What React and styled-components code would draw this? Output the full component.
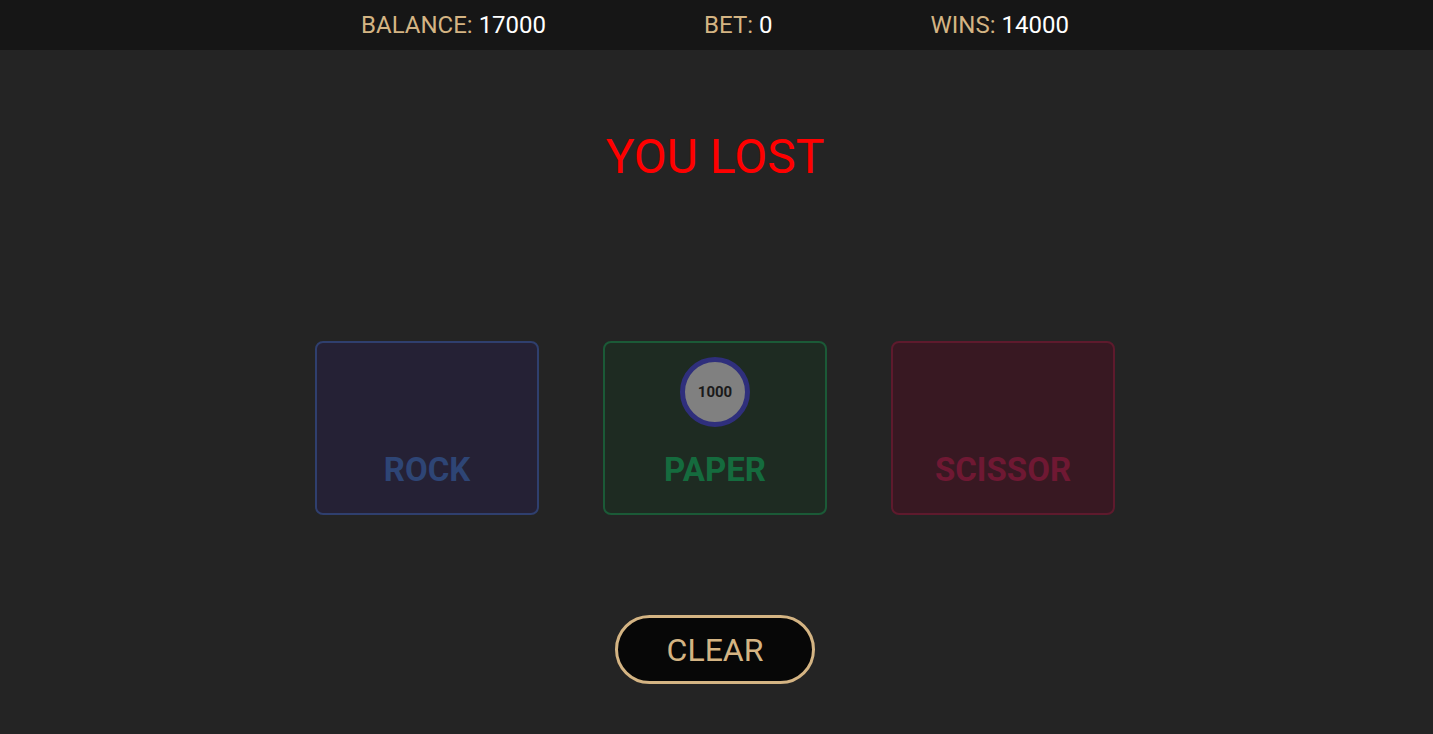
import React from "react";
import styled, { createGlobalStyle } from "styled-components";

const GlobalStyle = createGlobalStyle`
  html, body {
    margin: 0;
    padding: 0;
    background: #242424;
    font-family: Roboto, "Liberation Sans", Arial, sans-serif;
  }
`;

const Page = styled.div`
  min-height: 734px;
  background: #242424;
  display: flex;
  flex-direction: column;
  padding-right: 3px;
`;

const Header = styled.div`
  height: 50px;
  background: #161616;
  margin-right: -3px;
  padding-right: 3px;
  display: flex;
  align-items: center;
  justify-content: center;
  gap: 158px;
`;

const Stat = styled.div`
  font-size: 24px;
  color: #ffffff;
  white-space: nowrap;
`;

const StatLabel = styled.span`
  color: #d4b483;
`;

const Main = styled.div`
  display: flex;
  flex-direction: column;
  align-items: center;
  padding-top: 79px;
`;

const Result = styled.div`
  font-size: 48px;
  line-height: 56px;
  color: #ff0000;
`;

const Choices = styled.div`
  display: flex;
  gap: 64px;
  margin-top: 156px;
`;

const Card = styled.div`
  position: relative;
  box-sizing: border-box;
  width: 224px;
  height: 174px;
  border: 2px solid ${(p) => p.border};
  border-radius: 8px;
  background: ${(p) => p.bg};
  display: flex;
  flex-direction: column;
  justify-content: flex-end;
  align-items: center;
  padding-bottom: 23px;
`;

const CardLabel = styled.div`
  font-size: 33px;
  line-height: 40px;
  font-weight: 700;
  color: ${(p) => p.color};
`;

const Chip = styled.div`
  position: absolute;
  top: 14px;
  left: 50%;
  transform: translateX(-50%);
  box-sizing: border-box;
  width: 70px;
  height: 70px;
  border-radius: 50%;
  border: 5px solid #2f2f7c;
  background: #808080;
  display: flex;
  align-items: center;
  justify-content: center;
  font-size: 15px;
  font-weight: 700;
  color: #1a1a1a;
`;

const ClearButton = styled.button`
  margin-top: 100px;
  width: 200px;
  height: 69px;
  border: 3px solid #d4b483;
  border-radius: 35px;
  background: #070707;
  color: #d4b483;
  font-family: Roboto, "Liberation Sans", Arial, sans-serif;
  font-size: 32px;
  cursor: pointer;
`;

const choices = [
  { name: "ROCK", bg: "#252135", border: "#2f3f6e", color: "#2e4575" },
  { name: "PAPER", bg: "#1e2b22", border: "#1b5a37", color: "#156b3e", bet: 1000 },
  { name: "SCISSOR", bg: "#381822", border: "#5e1a2d", color: "#6f1833" },
];

const App = () => {
  return (
    <Page>
      <GlobalStyle />
      <Header>
        <Stat>
          <StatLabel>BALANCE:</StatLabel> 17000
        </Stat>
        <Stat>
          <StatLabel>BET:</StatLabel> 0
        </Stat>
        <Stat>
          <StatLabel>WINS:</StatLabel> 14000
        </Stat>
      </Header>
      <Main>
        <Result>YOU LOST</Result>
        <Choices>
          {choices.map((c) => (
            <Card key={c.name} bg={c.bg} border={c.border}>
              {c.bet && <Chip>{c.bet}</Chip>}
              <CardLabel color={c.color}>{c.name}</CardLabel>
            </Card>
          ))}
        </Choices>
        <ClearButton>CLEAR</ClearButton>
      </Main>
    </Page>
  );
};

export default App;
